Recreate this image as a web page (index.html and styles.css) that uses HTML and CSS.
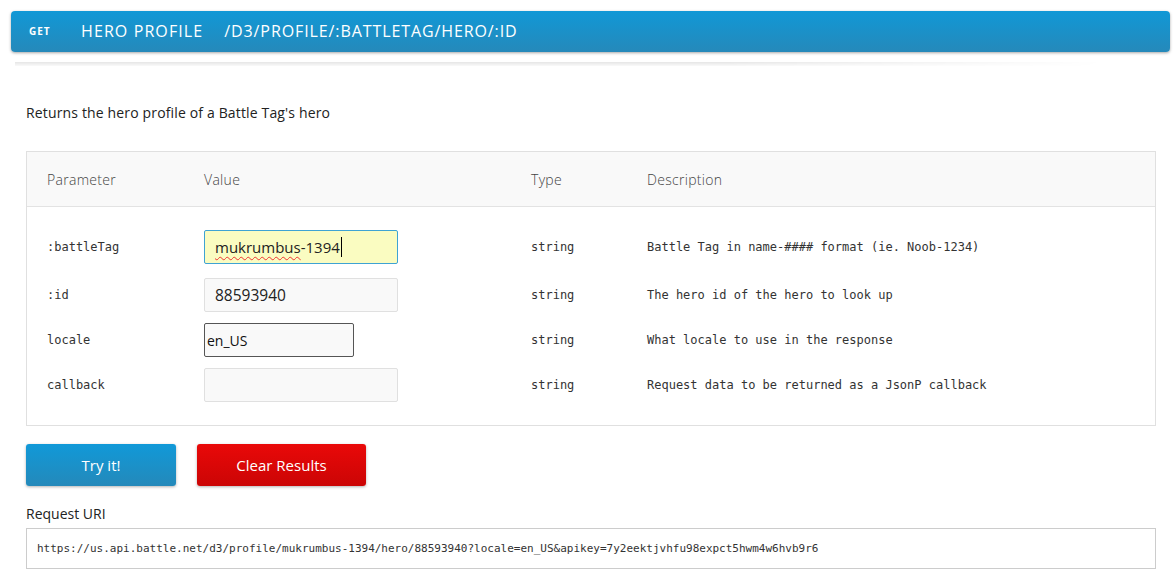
FILE: index.html
```html
<!DOCTYPE html>
<html lang="en">
<head>
<meta charset="utf-8">
<title>Hero Profile</title>
<link rel="stylesheet" href="styles.css">
</head>
<body>
<header class="endpoint">
  <span class="method">GET</span>
  <span class="name">HERO PROFILE</span>
  <span class="path">/D3/PROFILE/:BATTLETAG/HERO/:ID</span>
</header>
<div class="lift"></div>
<main class="content">
  <p class="desc">Returns the hero profile of a Battle Tag's hero</p>
  <section class="params">
    <div class="row head">
      <div>Parameter</div>
      <div>Value</div>
      <div>Type</div>
      <div>Description</div>
    </div>
    <div class="body">
      <div class="row first">
        <div class="mono">:battleTag</div>
        <div><div class="field focus"><span class="typo">mukrumbus</span>-1394<span class="caret"></span></div></div>
        <div class="mono">string</div>
        <div class="mono">Battle Tag in name-#### format (ie. Noob-1234)</div>
      </div>
      <div class="row">
        <div class="mono">:id</div>
        <div><input class="field" type="text" value="88593940"></div>
        <div class="mono">string</div>
        <div class="mono">The hero id of the hero to look up</div>
      </div>
      <div class="row">
        <div class="mono">locale</div>
        <div><input class="field small" type="text" value="en_US"></div>
        <div class="mono">string</div>
        <div class="mono">What locale to use in the response</div>
      </div>
      <div class="row">
        <div class="mono">callback</div>
        <div><input class="field" type="text" value=""></div>
        <div class="mono">string</div>
        <div class="mono">Request data to be returned as a JsonP callback</div>
      </div>
    </div>
  </section>
  <div class="actions">
    <button class="btn try">Try it!</button>
    <button class="btn clear">Clear Results</button>
  </div>
  <h3 class="uri-label">Request URI</h3>
  <div class="uri">https://us.api.battle.net/d3/profile/mukrumbus-1394/hero/88593940?locale=en_US&amp;apikey=7y2eektjvhfu98expct5hwm4w6hvb9r6</div>
</main>
</body>
</html>
```
FILE: styles.css
```css
* { box-sizing: border-box; }
body {
  margin: 0;
  background: #fff;
  font-family: "Open Sans", "Noto Sans", sans-serif;
  color: #222;
}
.endpoint {
  margin: 11px 4px 0 11px;
  height: 41px;
  border-radius: 4px;
  background: linear-gradient(to bottom, #1198d6, #2589ba);
  box-shadow: 0 1px 3px rgba(0,0,0,0.35);
  display: flex;
  align-items: center;
  color: #fff;
  padding-bottom: 1px;
}
.method {
  font-size: 10px;
  font-weight: 700;
  letter-spacing: 1px;
  margin-left: 18px;
  width: 52px;
}
.name {
  font-size: 16px;
  font-weight: 400;
  letter-spacing: 1.1px;
  margin-right: 21px;
}
.path {
  font-size: 16px;
  letter-spacing: 0.9px;
}
.lift {
  height: 4px;
  margin: 10px 70px 0 15px;
  background: linear-gradient(to bottom, rgba(0,0,0,0.1), rgba(0,0,0,0.02));
  -webkit-mask-image: linear-gradient(to right, #000 65%, transparent);
  mask-image: linear-gradient(to right, #000 65%, transparent);
}
.content {
  padding: 0 18px 0 26px;
}
.desc {
  margin: 37px 0 0;
  font-size: 14px;
  line-height: 20px;
  letter-spacing: 0.15px;
  color: #222;
}
.params {
  margin-top: 28px;
  border: 1px solid #e0e0e0;
}
.row {
  display: grid;
  grid-template-columns: 157px 327px 116px 1fr;
  padding-left: 20px;
  align-items: center;
}
.head {
  height: 55px;
  background: #f9f9f9;
  border-bottom: 1px solid #e3e3e3;
  font-size: 14px;
  font-weight: 300;
  letter-spacing: 0.3px;
  color: #444;
}
.body {
  padding: 23px 0 23px;
  display: flex;
  flex-direction: column;
  gap: 11px;
}
.row.first { margin-bottom: 3px; }
.mono {
  font-family: "DejaVu Sans Mono", "Liberation Mono", monospace;
  font-size: 12px;
  color: #333;
}
.field {
  display: block;
  width: 194px;
  height: 34px;
  border: 1px solid #e0e0e0;
  border-radius: 2px;
  background: #f9f9f9;
  font-family: "Open Sans", "Noto Sans", sans-serif;
  font-size: 15.5px;
  color: #222;
  padding: 0 10px;
  line-height: 32px;
  outline: none;
}
.field.focus {
  background: #fafcc1;
  border-color: #3ea3d3;
  display: flex;
  align-items: center;
  font-size: 15px;
}
.typo {
  text-decoration: underline wavy #e33;
  text-decoration-thickness: 1px;
  text-underline-offset: 3px;
}
.caret {
  display: inline-block;
  width: 1px;
  height: 20px;
  background: #000;
  margin-left: 1px;
}
.field.small {
  width: 150px;
  border: 1px solid #555;
  padding: 0 2px;
  font-size: 14px;
  color: #111;
}
.actions {
  margin-top: 18px;
  display: flex;
  gap: 21px;
}
.btn {
  height: 42px;
  border: none;
  border-radius: 3px;
  color: #fff;
  font-family: "Open Sans", "Noto Sans", sans-serif;
  font-size: 15px;
  box-shadow: 0 1px 3px rgba(0,0,0,0.3);
  cursor: pointer;
}
.try {
  width: 150px;
  background: linear-gradient(to bottom, #1199d8, #2489ba);
}
.clear {
  width: 169px;
  background: linear-gradient(to bottom, #e90909, #cb0505);
}
.uri-label {
  margin: 18px 0 4px;
  font-size: 14px;
  line-height: 20px;
  font-weight: 400;
  color: #222;
}
.uri {
  height: 41px;
  border: 1px solid #ccc;
  padding: 0 10px;
  display: flex;
  align-items: center;
  font-family: "DejaVu Sans Mono", "Liberation Mono", monospace;
  font-size: 11px;
  color: #333;
}
```
